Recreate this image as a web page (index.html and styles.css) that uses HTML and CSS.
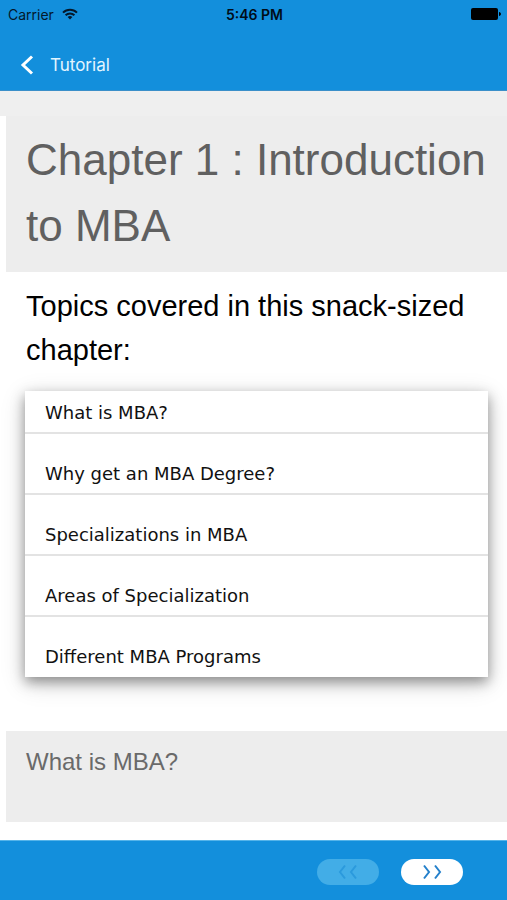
FILE: index.html
```html
<!DOCTYPE html>
<html lang="en">
<head>
<meta charset="utf-8">
<meta name="viewport" content="width=device-width, initial-scale=1">
<title>Tutorial</title>
<link rel="stylesheet" href="styles.css">
</head>
<body>
<header class="top">
  <div class="status">
    <div class="carrier">
      <span>Carrier</span>
      <svg width="16" height="12" viewBox="0 0 16 12" aria-hidden="true">
        <g fill="none" stroke="#04182b" stroke-width="2">
          <path d="M1 4.6a10 10 0 0 1 14 0"/>
          <path d="M3.6 7.3a6.2 6.2 0 0 1 8.8 0"/>
        </g>
        <path fill="#04182b" d="M8 11.6 5.6 9.1a3.4 3.4 0 0 1 4.8 0z"/>
      </svg>
    </div>
    <div class="time">5:46 PM</div>
    <svg class="battery" width="30" height="12" viewBox="0 0 30 12" aria-hidden="true">
      <rect width="27" height="12" rx="2"/>
      <path d="M28 4c2.6.6 2.6 3.4 0 4z"/>
    </svg>
  </div>
  <nav class="nav">
    <a class="back" href="#">
      <svg width="14" height="20" viewBox="0 0 14 20" aria-hidden="true">
        <path d="M12 1.5 3 10l9 8.500" fill="none" stroke="#fff" stroke-width="3"/>
      </svg>
      <span>Tutorial</span>
    </a>
  </nav>
</header>
<main class="content">
  <h1 class="title">Chapter 1 : Introduction to MBA</h1>
  <h2 class="lead">Topics covered in this snack-sized chapter:</h2>
  <ul class="topics">
    <li>What is MBA?</li>
    <li>Why get an MBA Degree?</li>
    <li>Specializations in MBA</li>
    <li>Areas of Specialization</li>
    <li>Different MBA Programs</li>
  </ul>
  <h2 class="section">What is MBA?</h2>
</main>
<footer class="pager">
  <button class="page-btn" type="button" aria-label="Previous page" disabled>
    <svg width="20" height="16" viewBox="0 0 20 16" aria-hidden="true">
      <path d="M7 1.500 2 8l5 6.500M18 1.500 13 8l5 6.500" fill="none" stroke="#2b9add" stroke-width="2"/>
    </svg>
  </button>
  <button class="page-btn" type="button" aria-label="Next page">
    <svg width="20" height="16" viewBox="0 0 20 16" aria-hidden="true">
      <path d="M2 1.500 7 8l-5 6.500M13 1.500 18 8l-5 6.500" fill="none" stroke="#2480cb" stroke-width="2"/>
    </svg>
  </button>
</footer>
</body>
</html>
```
FILE: styles.css
```css
* {
  box-sizing: border-box;
}

body {
  margin: 0;
  min-height: 100vh;
  display: flex;
  flex-direction: column;
  background: #fff;
  font-family: "Liberation Sans", Arial, sans-serif;
}

h1, h2, ul {
  margin: 0;
  padding: 0;
  font-weight: 400;
}

.top {
  background: #138fdc;
  border-bottom: 1px solid #3a8fc9;
  font-family: Inter, sans-serif;
}

.status {
  display: grid;
  grid-template-columns: 1fr auto 1fr;
  align-items: center;
  height: 28px;
  padding: 0 6px 0 8px;
  color: #04182b;
  font-size: 14px;
}

.carrier {
  display: flex;
  align-items: center;
  gap: 8px;
}

.time {
  color: #000c18;
  font-weight: 600;
}

.battery {
  justify-self: end;
}

.nav {
  display: flex;
  align-items: center;
  height: 62px;
  padding: 12px 20px 0;
}

.back {
  display: flex;
  align-items: center;
  gap: 16px;
  color: #e2f5ff;
  font-size: 17px;
  line-height: 24px;
  text-decoration: none;
}

.content {
  flex: 1;
  border-top: 25px solid #efefef;
  padding: 0 0 18px 6px;
}

.title {
  padding: 11px 20px 13px;
  background: #ededed;
  color: #606060;
  font-size: 44px;
  line-height: 66px;
}

.lead {
  padding: 12px 20px 0;
  color: #000;
  font-size: 29px;
  line-height: 44px;
}

.topics {
  margin: 19px 19px 0;
  background: #fff;
  box-shadow: 0 5px 12px rgba(0, 0, 0, 0.38), 0 6px 24px rgba(0, 0, 0, 0.16);
  color: #111;
  font-family: "DejaVu Sans", Verdana, sans-serif;
  font-size: 18px;
  line-height: 22px;
  list-style: none;
}

.topics li {
  padding: 29px 20px 8px;
  border-bottom: 2px solid #e3e3e3;
}

.topics li:first-child {
  padding-top: 11px;
}

.topics li:last-child {
  padding-bottom: 9px;
  border-bottom: 0;
}

.section {
  min-height: 91px;
  margin-top: 54px;
  padding: 13px 20px;
  background: #ededed;
  color: #6a6a6a;
  font-size: 24px;
  line-height: 36px;
}

.pager {
  display: flex;
  align-items: center;
  justify-content: flex-end;
  gap: 22px;
  height: 60px;
  padding: 2px 44px 0;
  border-top: 1px solid #55b4ea;
  background: #138fdc;
}

.page-btn {
  display: flex;
  align-items: center;
  justify-content: center;
  width: 62px;
  height: 26px;
  padding: 0;
  border: 0;
  border-radius: 13px;
  background: #fff;
}

.page-btn:disabled {
  background: #42ade7;
}
```
